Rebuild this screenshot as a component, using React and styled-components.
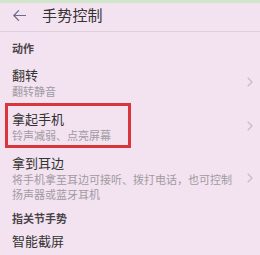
import React from "react";
import styled, { createGlobalStyle } from "styled-components";

const GlobalStyle = createGlobalStyle`
  html, body {
    margin: 0;
    padding: 0;
    background: #f3e3f1;
    font-family: "Noto Sans CJK SC", "Noto Sans", sans-serif;
  }
`;

const sections = [
  {
    title: "动作",
    items: [
      { name: "翻转", desc: ["翻转静音"] },
      { name: "拿起手机", desc: ["铃声减弱、点亮屏幕"], marked: true },
      {
        name: "拿到耳边",
        desc: ["将手机拿至耳边可接听、拨打电话，也可控制", "扬声器或蓝牙耳机"],
      },
    ],
  },
  {
    title: "指关节手势",
    items: [{ name: "智能截屏", desc: [] }],
  },
];

const BackArrow = () => (
  <svg width="13" height="11" viewBox="0 0 13 11" fill="none">
    <path
      d="M0.8 5.5 H12.5 M5.6 0.7 L0.8 5.5 L5.6 10.3"
      stroke="#6a6a8a"
      strokeWidth="1.2"
      strokeLinecap="round"
      strokeLinejoin="round"
    />
  </svg>
);

const Chevron = () => (
  <svg width="6" height="10" viewBox="0 0 6 10" fill="none">
    <path
      d="M1 1 L5 5 L1 9"
      stroke="#c6b9c5"
      strokeWidth="1.1"
      strokeLinecap="round"
      strokeLinejoin="round"
    />
  </svg>
);

export default function App() {
  return (
    <Screen>
      <GlobalStyle />
      <StatusStrip />
      <Header>
        <BackArrow />
        <Title>手势控制</Title>
      </Header>
      <Divider />
      {sections.map((section) => (
        <Section key={section.title}>
          <SectionTitle>{section.title}</SectionTitle>
          {section.items.map((item) => (
            <Item key={item.name}>
              <ItemText>
                <ItemName>{item.name}</ItemName>
                {item.desc.map((line) => (
                  <ItemDesc key={line}>{line}</ItemDesc>
                ))}
              </ItemText>
              {item.desc.length > 0 && <Chevron />}
              {item.marked && <Marker />}
            </Item>
          ))}
        </Section>
      ))}
    </Screen>
  );
}

const Screen = styled.div`
  width: 260px;
  height: 255px;
  overflow: hidden;
  background: #f3e3f1;
`;

const StatusStrip = styled.div`
  height: 3px;
  background: #cfe6cb;
`;

const Header = styled.div`
  display: flex;
  align-items: center;
  gap: 16px;
  padding: 1px 0 5px 13px;
  height: 22px;
`;

const Title = styled.div`
  font-size: 15px;
  line-height: 22px;
  color: #333;
  letter-spacing: 0.2px;
`;

const Divider = styled.div`
  height: 1px;
  background: #ddd0db;
`;

const Section = styled.div`
  display: flex;
  flex-direction: column;
`;

const SectionTitle = styled.div`
  font-size: 11px;
  line-height: 14px;
  font-weight: 700;
  color: #4a4448;
  padding: 9px 12px 5px;
  ${Section} + ${Section} & {
    padding-top: 4px;
    padding-bottom: 1px;
  }
`;

const Item = styled.div`
  position: relative;
  display: flex;
  align-items: center;
  padding: 5px 7px 5px 12px;
`;

const ItemText = styled.div`
  flex: 1;
  display: flex;
  flex-direction: column;
  padding-right: 8px;
`;

const ItemName = styled.div`
  font-size: 13px;
  line-height: 19px;
  color: #333;
`;

const ItemDesc = styled.div`
  font-size: 11px;
  line-height: 15px;
  color: #a19aa0;
  &:first-of-type {
    margin-top: 1px;
  }
`;

const Marker = styled.div`
  position: absolute;
  left: 5px;
  top: -1px;
  width: 126px;
  height: 45px;
  box-sizing: border-box;
  border: 3px solid #d8353d;
`;
